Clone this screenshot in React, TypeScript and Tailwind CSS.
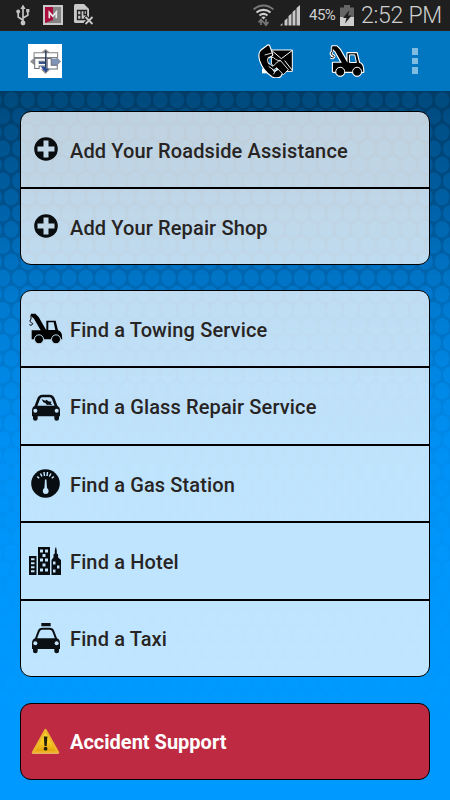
import type { ReactNode } from "react";

const honeycombRows = Array.from({ length: 38 }, (_, i) => i);
const honeycombCols = Array.from({ length: 29 }, (_, i) => i);

// cells get brighter towards the bottom of the page
const cellOpacity = (row: number) => Math.min(0.14 + row * 0.013, 0.5);

const Honeycomb = () => (
  <svg className="absolute inset-0 h-full w-full" viewBox="0 0 450 709">
    {honeycombRows.map((row) =>
      honeycombCols.map((col) => (
        <ellipse
          key={`${row}-${col}`}
          cx={(row % 2 ? 2.9 : 11.2) + (col - 1) * 16.57}
          cy={9 + row * 16.17}
          rx="7.4"
          ry="8.3"
          fill="#0099ff"
          fillOpacity={cellOpacity(row)}
        />
      )),
    )}
  </svg>
);

const UsbIcon = () => (
  <svg className="h-[22px] w-[14px]" viewBox="0 0 14 22" fill="none" stroke="#c4c4c4" strokeWidth="1.7">
    <path d="M7 4v15M7 16.2 2.2 13V8.5M7 14l4.800-2.800V7" />
    <path d="M7 .5 9.600 5H4.400zM10.200 5h3.200v3.200h-3.200z" fill="#c4c4c4" stroke="none" />
    <circle cx="2.2" cy="7.5" r="1.9" fill="#c4c4c4" stroke="none" />
    <circle cx="7" cy="19" r="2.4" fill="#c4c4c4" stroke="none" />
  </svg>
);

const MobileIcon = () => (
  <svg className="h-5 w-5" viewBox="0 0 20 20">
    <path d="M0 0h20v20H0z" fill="#c9c9c9" />
    <path d="M2 2h16v16H2z" fill="#858585" />
    <path d="M2 2h8v13l-8 3z" fill="#a90d3c" />
    <path d="M6.3 13.3V7.5l3.500 3.700 3.500-4.200v6.300" fill="none" stroke="#e8e8e8" strokeWidth="1.7" />
  </svg>
);

const SimIcon = () => (
  <svg className="h-[22px] w-5" viewBox="0 0 20 22">
    <path d="M1.5 0H10l5 5v9l-5 5H1.500Q0 19 0 17.500V1.500Q0 0 1.500 0z" fill="#c8c8c8" />
    <path
      d="M3.500 6.500h9v9h-9zM3.500 11h3.500M7 6.500v9M10 6.500v5M10 10.500h2.500"
      fill="none"
      stroke="#202020"
      strokeWidth="1.300"
    />
    <path d="m11 12.500 8 7.500m0-7.500L11 20" stroke="#1f1f1f" strokeWidth="4" />
    <path d="m11.500 13 7 7m0-7-7 7" stroke="#c8c8c8" strokeWidth="1.800" />
  </svg>
);

const WifiIcon = () => (
  <svg className="h-[23px] w-[21px]" viewBox="0 0 21 23" fill="none">
    <path d="M.7 5.500C6.500.2 14.500.2 20.300 5.500" stroke="#777" strokeWidth="2" />
    <path d="M3.500 8.500C7.500 5 13.500 5 17.500 8.500M6.500 11.500c2.500-2 5.500-2 8 0" stroke="#cecece" strokeWidth="2.100" />
    <path d="M8.300 13q2.200-1 4.400 0l-2.200 2.500z" fill="#cecece" />
    <path d="M8 21v-5M5.500 18.500 8 15.500l2.500 3M13 15v6M10.500 18l2.500 3.200 2.500-3.200" stroke="#777" strokeWidth="1.700" />
  </svg>
);

const SignalIcon = () => (
  <svg className="h-[21px] w-5" viewBox="0 0 20 21" fill="#c8c8c8">
    <path d="M0 20.500 2.500 18v2.500zM4.500 15.500 7.500 13v7.500h-3zM8.500 11l3-2.500v12h-3zM12.500 7l3-2.500v16h-3zM16.500 3l3.500-3v20.500h-3.500z" />
  </svg>
);

const BatteryIcon = () => (
  <svg className="h-[21px] w-[14px]" viewBox="0 0 14 21">
    <path d="M4 0h6v2.500h4V12H0V2.500h4z" fill="#666" />
    <path d="M0 12h14v9H0z" fill="#cecece" />
    <path d="m9.500 5-6.500 8h3.500L5 18.500l6.500-8H8z" fill="#1e1e1e" />
  </svg>
);

const AppLogo = () => (
  <div className="flex h-[34px] w-[34px] items-center justify-center bg-white">
    <svg className="h-[25px] w-[31px]" viewBox="0 0 92 74" fill="none">
      <path d="M46 0 60 11H32zM0 37 14 25v24zM92 37 78 23v28zM46 74 32 60h28z" fill="#8f8f93" />
      <path d="M12 11h70v14H12z" fill="#fff" stroke="#808086" strokeWidth="3" />
      <path d="M50 28h32l7 9-12 13H50z" fill="#7f93b6" />
      <path d="M14 27h32v9H27v6h19v8H27v8H14z" fill="#fff" stroke="#686e78" strokeWidth="3" />
      <path d="M27 38h20v6H27z" fill="#2f4f8c" />
      <path d="M51 28h12v20h18v11H51z" fill="#fff" stroke="#686e78" strokeWidth="3" />
      <path d="M47 5v62" stroke="#1a2c52" strokeWidth="4" />
      <path d="M32 52h15v6h9l-9 11-9-9z" fill="#274a90" />
    </svg>
  </div>
);

const PhoneMailIcon = () => (
  <svg className="h-[34px] w-[35px]" viewBox="0 0 105 102" strokeLinejoin="round">
    <path d="M12 74h22v14H12z" fill="#fff" />
    <path d="M40 18h63v64H66L40 60z" fill="#000" stroke="#fff" strokeWidth="3" />
    <path d="m42 20 28 24 32-24M80 50l22 28" fill="none" stroke="#fff" strokeWidth="3" />
    <path
      d="M8 19 29 3q4-2 6 2l9 25q1 5-3 7l-10 5q-3 12 6 24l12 16 14-7 13 9-8 14q-10 7-25 1Q14 80 5 50-1 27 8 19z"
      fill="#000"
      stroke="#fff"
      strokeWidth="3.500"
    />
    <path d="m20 33 22-6M46 91l10-15" stroke="#fff" strokeWidth="2.500" />
    <path
      d="M33 38q-8 10-2 20l14 9 13-13 12 8 15 22-9 8-20-21-9 7-15-11"
      fill="#000"
      stroke="#fff"
      strokeWidth="2.500"
    />
    <path d="M37 40q10-2 16 6l14 6M58 54l8-6 25 29-8 8" fill="#000" stroke="#fff" strokeWidth="2.500" />
  </svg>
);

const truckBody =
  "M6 2h13l10 10 22 38h1V23h28l7 29q12 4 12 18l1 9H8V52h27L15 17 6 9z";
const truckHook = "M6 5v13M6 18q-8 8 1 11t-1 8l-5-2";

const TowTruck = ({ outlined = false }: { outlined?: boolean }) => (
  <svg className={outlined ? "h-[34px] w-[36px]" : "h-[31px] w-[34px]"} viewBox={outlined ? "-4 -4 109 101" : "0 0 102 93"}>
    {outlined && (
      <g fill="#fff" stroke="#fff" strokeWidth="7" strokeLinejoin="round">
        <path d={truckBody} />
        <path d={truckHook} fill="none" strokeWidth="9" />
        <circle cx="30" cy="79" r="12" />
        <circle cx="81" cy="79" r="12" />
      </g>
    )}
    <path d={truckBody} fill="#000" />
    <path d={truckHook} fill="none" stroke="#000" strokeWidth="3" />
    <path
      d="M58 28h16l5 23H58z"
      fill={outlined ? "#0077c0" : "#c0e0f6"}
      stroke={outlined ? "#fff" : "none"}
      strokeWidth="3"
    />
    <g fill="#000" stroke={outlined ? "#fff" : "#c0e0f6"} strokeWidth="3">
      <circle cx="30" cy="79" r="13.5" />
      <circle cx="81" cy="79" r="13.5" />
    </g>
  </svg>
);

const PlusIcon = () => (
  <svg className="mb-[2px] h-6 w-6" viewBox="0 0 24 24">
    <circle cx="12" cy="12" r="11.800" fill="#090d0f" />
    <path d="M12 3.500v17M3.500 12h17" stroke="#c2d7e5" strokeWidth="5" />
  </svg>
);

const CarIcon = ({ taxi = false }: { taxi?: boolean }) => (
  <svg
    className={taxi ? "h-[31px] w-[30px]" : "mt-[3px] h-[27px] w-[30px]"}
    viewBox={taxi ? "0 -11 90 93" : "0 0 90 81"}
  >
    {taxi && <path d="M31-11h28v10H31z" fill="#0b1015" />}
    <path
      d="M14 38 23 14Q26 6 34 6h22q8 0 11 8l9 24"
      fill="none"
      stroke="#0b1015"
      strokeWidth={taxi ? "6" : "8"}
    />
    <path
      d="M12 35h66q9 3 9 15v17h-3v7q0 6-7 6t-7-6v-7H20v7q0 6-7 6t-7-6v-7H3V50q0-12 9-15z"
      fill="#0b1015"
    />
    <circle cx="13" cy="50" r="6" fill="#c3e3fa" />
    <circle cx="77" cy="50" r="6" fill="#c3e3fa" />
    {!taxi && <path d="m32 16 11 4 4-3 5 5 10 1-3 5 5 6-11-2-5 1-5-6-6-2z" fill="#0b1015" />}
  </svg>
);

const GaugeIcon = () => (
  <svg className="h-[29px] w-[29px]" viewBox="0 0 29 29">
    <circle cx="14.500" cy="14.500" r="14.300" fill="#080d12" />
    <path
      d="m6.200 7.500 2 1.800M9.500 4.500l1.400 3M13 3l.5 4M16.500 3 16 7M20 4.500l-1.700 3M22.800 7.500l-2 1.800"
      stroke="#c3e4fb"
      strokeWidth="1.500"
    />
    <path d="M14 10.500h1.400l.7 10h-2.800z" fill="#c3e4fb" />
    <circle cx="14.700" cy="22" r="2.900" fill="#c3e4fb" />
  </svg>
);

const HotelIcon = () => (
  <svg className="h-[30px] w-[33px]" viewBox="0 0 33 30">
    <path d="M0 10h7.500v19H0zM9 1h12v28H9zM22.500 14l2-2.500V8.500l1.300-1V5l.6-3.500h.8l.6 3.500v2.500l1.300 1v3l2.900 2.500v15h-9.500z" fill="#080d12" />
    <path
      d="M2 12.300h3.500v2H2zM2 16.300h3.500v2H2zM2 20.300h3.500v2H2zM2 24.300h3.500v2H2zM11 3.500h3v3h-3zM16 3.500h3v3h-3zM13.500 8h3v3h-3zM11 12.500h3v3h-3zM16 12.500h3v3h-3zM13.500 17.500h3v3h-3zM11 22.500h3v3h-3zM16 22.500h3v3h-3zM24 15.500h2.500v3H24zM28 19.500h2.500v3H28zM24 23.500h2.500v3H24z"
      fill="#c3e4fb"
    />
  </svg>
);

const WarningIcon = () => (
  <svg className="h-[27px] w-[29px]" viewBox="0 0 29 27">
    <defs>
      <linearGradient id="gold" x1="0" y1="0" x2="0" y2="1">
        <stop offset="0" stopColor="#fad62f" />
        <stop offset="0.550" stopColor="#f9cb22" />
        <stop offset="1" stopColor="#e29e0d" />
      </linearGradient>
    </defs>
    <path d="M14.500 2 27 24.500H2z" fill="url(#gold)" stroke="#edb52c" strokeWidth="2.500" strokeLinejoin="round" />
    <path d="M1.500 25.300h26" stroke="#e9b969" strokeWidth="1" />
    <path d="M12.800 8.500h3.600L15.700 18h-2.200z" fill="#242109" />
    <circle cx="14.600" cy="20.700" r="1.900" fill="#242109" />
  </svg>
);

interface MenuItem {
  label: string;
  icon: ReactNode;
}

const providers: MenuItem[] = [
  { label: "Add Your Roadside Assistance", icon: <PlusIcon /> },
  { label: "Add Your Repair Shop", icon: <PlusIcon /> },
];

const services: MenuItem[] = [
  { label: "Find a Towing Service", icon: <TowTruck /> },
  { label: "Find a Glass Repair Service", icon: <CarIcon /> },
  { label: "Find a Gas Station", icon: <GaugeIcon /> },
  { label: "Find a Hotel", icon: <HotelIcon /> },
  { label: "Find a Taxi", icon: <CarIcon taxi /> },
];

const MenuRow = ({ label, icon }: MenuItem) => (
  <button className="flex min-h-0 w-full flex-1 items-center text-left">
    <span className="flex w-[49px] shrink-0 justify-center">{icon}</span>
    <span className="whitespace-nowrap pt-[2px] text-[20px] font-medium leading-6 tracking-[0.13px]">{label}</span>
  </button>
);

const MenuCard = ({ items, className }: { items: MenuItem[]; className: string }) => (
  <section
    className={`flex flex-col divide-y-2 divide-black overflow-hidden rounded-[11px] border border-black bg-white/75 text-[#282423] ${className}`}
  >
    {items.map((item) => (
      <MenuRow key={item.label} {...item} />
    ))}
  </section>
);

const App = () => {
  return (
    <div className="flex h-[800px] w-[450px] flex-col overflow-hidden font-['Roboto',sans-serif]">
      {/* Status bar */}
      <div className="flex h-[31px] shrink-0 items-center justify-between border-b border-[#2c2018] bg-[#1f1f1f] pl-[16px] pr-2">
        <div className="flex items-center gap-[11px]">
          <UsbIcon />
          <span className="pl-[2px]"><MobileIcon /></span>
          <SimIcon />
        </div>
        <div className="flex items-center text-[#cecece]">
          <WifiIcon />
          <span className="ml-[6px]"><SignalIcon /></span>
          <span className="ml-[9px] w-[28px] whitespace-nowrap pt-px text-[15px] tracking-[-0.5px]">45%</span>
          <span className="ml-[3px]"><BatteryIcon /></span>
          <span className="ml-[7px] whitespace-nowrap pt-[2px] text-[23px] font-light leading-[28px] tracking-[-0.25px]">2:52 PM</span>
        </div>
      </div>

      {/* Action bar */}
      <header className="flex h-[60px] shrink-0 items-center bg-[#0077c0] pl-7">
        <AppLogo />
        <div className="ml-auto flex items-center">
          <PhoneMailIcon />
          <span className="ml-[36px]"><TowTruck outlined /></span>
          <div className="ml-[47px] mr-8 flex flex-col gap-[3px]">
            <span className="h-[6.500px] w-[6px] bg-[#80bbe0]" />
            <span className="h-[6.500px] w-[6px] bg-[#80bbe0]" />
            <span className="h-[6.500px] w-[6px] bg-[#80bbe0]" />
          </div>
        </div>
      </header>

      <main className="relative flex-1 bg-[linear-gradient(180deg,#003c66_0%,#004d86_14%,#006ab6_28%,#007dd5_40%,#008def_52%,#0094f8_68%,#0098fd_84%,#0099ff_90%)]">
        <Honeycomb />
        <div className="relative flex flex-col px-5 pt-5">
          <MenuCard items={providers} className="h-[154px]" />
          <MenuCard items={services} className="mt-[25px] h-[387px]" />
          <section className="mt-[26px] flex h-[77px] rounded-[11px] border border-black bg-[#be2a42] text-white">
            <button className="flex w-full items-center text-left">
              <span className="flex w-[49px] shrink-0 justify-center"><WarningIcon /></span>
              <span className="pt-px text-[20px] font-bold leading-6">Accident Support</span>
            </button>
          </section>
        </div>
      </main>
    </div>
  );
};

export default App;
